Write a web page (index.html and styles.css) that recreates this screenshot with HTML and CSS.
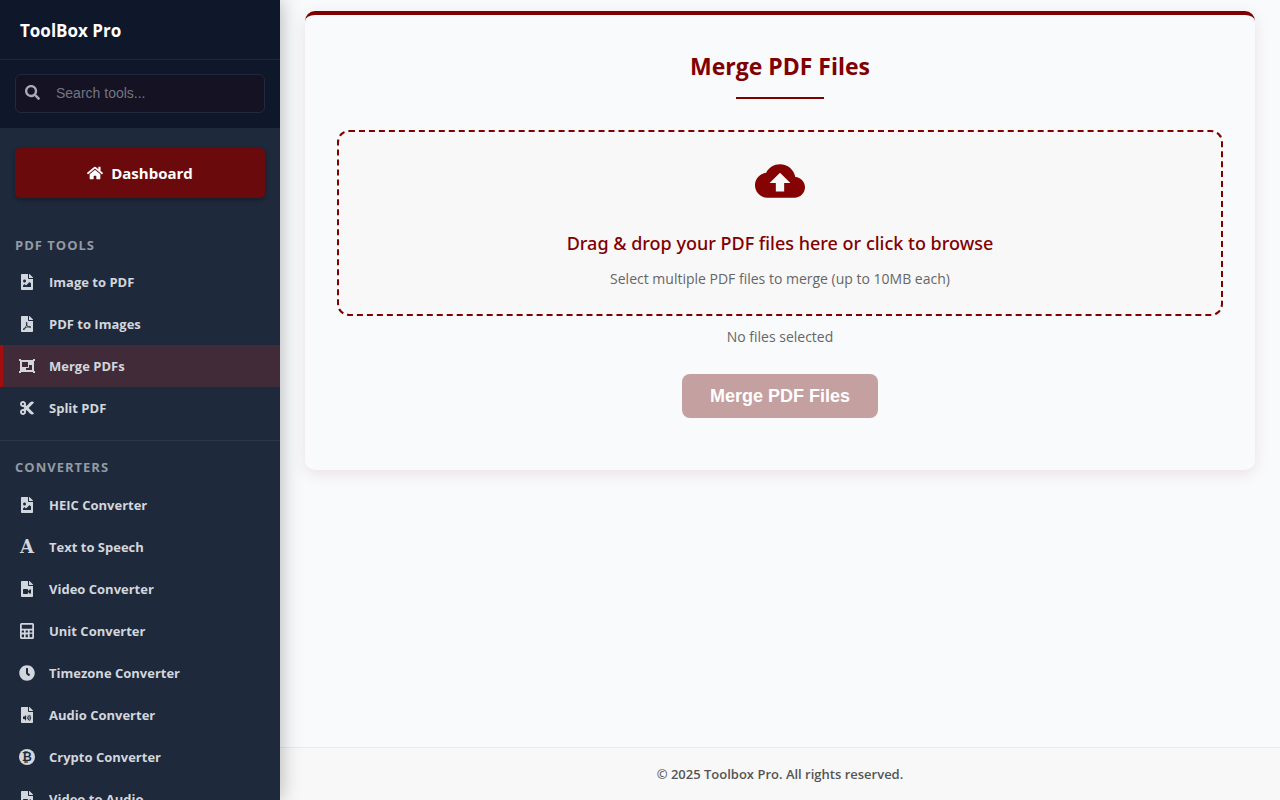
FILE: index.html
```html
<!DOCTYPE html>
<html lang="en">
<head>
<meta charset="utf-8">
<meta name="viewport" content="width=device-width, initial-scale=1">
<title>Merge PDF Files - ToolBox Pro</title>
<link rel="stylesheet" href="styles.css">
</head>
<body>
<svg class="sprite" aria-hidden="true">
  <symbol id="i-image" viewBox="0 0 384 512"><path d="M384 121.941V128H256V0h6.059a24 24 0 0 1 16.97 7.029l97.941 97.941a24.002 24.002 0 0 1 7.03 16.971zM248 160c-13.2 0-24-10.8-24-24V0H24C10.745 0 0 10.745 0 24v464c0 13.255 10.745 24 24 24h336c13.255 0 24-10.745 24-24V160H248zm-135.455 16c26.51 0 48 21.49 48 48s-21.49 48-48 48-48-21.49-48-48 21.491-48 48-48zm208 240h-256l.485-48.485L104.545 328c4.686-4.686 11.799-4.201 16.485.485L160.545 368 264.06 264.485c4.686-4.686 12.284-4.686 16.971 0L320.545 304v112z"/></symbol>
  <symbol id="i-pdf" viewBox="0 0 384 512"><path d="M181.9 256.1c-5-16-4.9-46.9-2-46.9 8.4 0 7.6 36.9 2 46.9zm-1.7 47.2c-7.7 20.2-17.3 43.3-28.4 62.7 18.3-7 39-17.2 62.9-21.9-12.7-9.6-24.9-23.4-34.5-40.8zM86.1 428.1c0 .8 13.2-5.4 34.9-40.2-6.7 6.3-29.1 24.5-34.9 40.2zM248 160h136v328c0 13.3-10.7 24-24 24H24c-13.3 0-24-10.7-24-24V24C0 10.7 10.7 0 24 0h200v136c0 13.2 10.8 24 24 24zm-8 171.8c-20-12.2-33.3-29-42.7-53.8 4.5-18.5 11.6-46.6 6.2-64.2-4.7-29.4-42.4-26.5-47.8-6.8-5 18.3-.4 44.1 8.1 77-11.6 27.6-28.7 64.6-40.8 85.8-.1 0-.1.1-.2.1-27.1 13.9-73.6 44.5-54.5 68 5.6 6.9 16 10 21.5 10 17.9 0 35.7-18 61.1-61.8 25.8-8.5 54.1-19.1 79-23.2 21.7 11.8 47.1 19.5 64 19.5 29.2 0 31.2-32 19.7-43.4-13.9-13.6-54.3-9.7-73.6-7.2zM377 105L279 7c-4.5-4.5-10.6-7-17-7h-6v128h128v-6.1c0-6.3-2.5-12.4-7-16.9zm-74.1 255.3c4.1-2.7-2.5-11.9-42.8-9 37.1 15.8 42.8 9 42.8 9z"/></symbol>
  <symbol id="i-group" viewBox="0 0 512 512"><path fill-rule="evenodd" d="M480 128V96h20c6.627 0 12-5.373 12-12V44c0-6.627-5.373-12-12-12h-40c-6.627 0-12 5.373-12 12v20H64V44c0-6.627-5.373-12-12-12H12C5.373 32 0 37.373 0 44v40c0 6.627 5.373 12 12 12h20v320H12c-6.627 0-12 5.373-12 12v40c0 6.627 5.373 12 12 12h40c6.627 0 12-5.373 12-12v-20h384v20c0 6.627 5.373 12 12 12h40c6.627 0 12-5.373 12-12v-40c0-6.627-5.373-12-12-12h-20V128zM96 276V140c0-6.600 5.400-12 12-12h168c6.600 0 12 5.400 12 12v136c0 6.600-5.400 12-12 12H108c-6.600 0-12-5.400-12-12zm320 96c0 6.600-5.400 12-12 12H236c-6.600 0-12-5.400-12-12v-52h72c13.300 0 24-10.700 24-24v-72h84c6.600 0 12 5.400 12 12v136z"/></symbol>
  <symbol id="i-cut" viewBox="0 0 448 512"><path d="M278.06 256L444.48 89.57c4.69-4.69 4.69-12.29 0-16.97-32.8-32.8-85.99-32.8-118.79 0L210.18 188.12l-24.86-24.86c4.31-10.92 6.68-22.81 6.68-35.26 0-53.02-42.98-96-96-96S0 74.98 0 128s42.98 96 96 96c4.54 0 8.99-.32 13.36-.93L142.29 256l-32.93 32.93c-4.37-.61-8.83-.93-13.36-.93-53.02 0-96 42.98-96 96s42.98 96 96 96 96-42.98 96-96c0-12.45-2.37-24.34-6.68-35.26l24.86-24.86L325.69 439.4c32.8 32.8 85.99 32.8 118.79 0 4.69-4.68 4.69-12.28 0-16.97L278.06 256zM96 160c-17.64 0-32-14.36-32-32s14.36-32 32-32 32 14.36 32 32-14.36 32-32 32zm0 256c-17.64 0-32-14.36-32-32s14.36-32 32-32 32 14.36 32 32-14.36 32-32 32z"/></symbol>
  <symbol id="i-video" viewBox="0 0 384 512"><path fill-rule="evenodd" d="M377 105L279 7c-4.500-4.500-10.600-7-17-7h-6v128h128v-6.100c0-6.300-2.500-12.400-7-16.900zM248 160c-13.200 0-24-10.800-24-24V0H24C10.700 0 0 10.700 0 24v464c0 13.300 10.700 24 24 24h336c13.300 0 24-10.700 24-24V160zM88 256h112c13 0 24 11 24 24v42l56-54c15-15 40-4 40 17v102c0 21-25 32-40 17l-56-54v42c0 13-11 24-24 24H88c-13 0-24-11-24-24V280c0-13 11-24 24-24z"/></symbol>
  <symbol id="i-audio" viewBox="0 0 384 512"><path fill-rule="evenodd" d="M377 105L279 7c-4.500-4.500-10.600-7-17-7h-6v128h128v-6.100c0-6.300-2.500-12.400-7-16.900zM248 160c-13.200 0-24-10.800-24-24V0H24C10.700 0 0 10.700 0 24v464c0 13.300 10.700 24 24 24h336c13.300 0 24-10.700 24-24V160zM64 306h46l50-50v180l-50-50H64z"/><path d="M194 304q26 42 0 84M232 270q56 76 0 152M274 252q72 94 0 188" fill="none" stroke="#1e293b" stroke-width="32"/></symbol>
  <symbol id="i-calc" viewBox="0 0 448 512"><path fill-rule="evenodd" d="M48 0h352q48 0 48 48v416q0 48-48 48H48q-48 0-48-48V48Q0 0 48 0zM56 56v128h336V56zM56 240v64h72v-64zm124 0v64h72v-64zM56 368v88h72v-88zm124 0v88h72v-88zM308 240v64h84v-64zM308 344v112h84V344z"/></symbol>
  <symbol id="i-clock" viewBox="0 0 512 512"><path d="M256 8C119 8 8 119 8 256s111 248 248 248 248-111 248-248S393 8 256 8zm92.490 313l-20 25a16 16 0 0 1-22.490 2.500l-67-49.720a40 40 0 0 1-15-31.230V112a16 16 0 0 1 16-16h32a16 16 0 0 1 16 16v144l58 42.500a16 16 0 0 1 2.490 22.500z"/></symbol>
</svg>
<div class="app">
  <aside class="sidebar">
    <div class="brand">ToolBox Pro</div>
    <div class="search">
      <label class="search-box">
        <svg class="search-icon" viewBox="0 0 512 512" aria-hidden="true"><path d="M505 442.700L405.300 343c-4.500-4.500-10.600-7-17-7H372c27.600-35.300 44-79.700 44-128C416 93.100 322.900 0 208 0S0 93.100 0 208s93.100 208 208 208c48.300 0 92.700-16.400 128-44v16.300c0 6.400 2.500 12.500 7 17l99.700 99.700c9.400 9.400 24.600 9.400 33.900 0l28.300-28.300c9.400-9.400 9.400-24.600.1-34zM208 336c-70.700 0-128-57.200-128-128 0-70.700 57.200-128 128-128 70.700 0 128 57.200 128 128 0 70.700-57.200 128-128 128z"/></svg>
        <input class="search-input" type="search" placeholder="Search tools..." aria-label="Search tools">
      </label>
    </div>
    <a class="dashboard" href="#"><svg class="home-icon" viewBox="0 0 576 512" aria-hidden="true"><path d="M280.370 148.260L96 300.110V464a16 16 0 0 0 16 16l112.060-.29a16 16 0 0 0 15.920-16V368a16 16 0 0 1 16-16h64a16 16 0 0 1 16 16v95.640a16 16 0 0 0 16 16.050L464 480a16 16 0 0 0 16-16V300L295.670 148.260a12.190 12.190 0 0 0-15.300 0zM571.600 251.470L488 182.560V44.050a12 12 0 0 0-12-12h-56a12 12 0 0 0-12 12v72.610L318.470 43a48 48 0 0 0-61 0L4.340 251.470a12 12 0 0 0-1.600 16.900l25.500 31A12 12 0 0 0 45.150 301l235.220-193.740a12.190 12.190 0 0 1 15.300 0L530.900 301a12 12 0 0 0 16.900-1.600l25.500-31a12 12 0 0 0-1.700-16.930z"/></svg>Dashboard</a>
    <nav>
      <section class="group">
        <h2 class="group-title">PDF TOOLS</h2>
        <a class="tool" href="#"><svg class="icon"><use href="#i-image"/></svg>Image to PDF</a>
        <a class="tool" href="#"><svg class="icon"><use href="#i-pdf"/></svg>PDF to Images</a>
        <a class="tool active" href="#" aria-current="page"><svg class="icon"><use href="#i-group"/></svg>Merge PDFs</a>
        <a class="tool" href="#"><svg class="icon"><use href="#i-cut"/></svg>Split PDF</a>
      </section>
      <section class="group">
        <h2 class="group-title">CONVERTERS</h2>
        <a class="tool" href="#"><svg class="icon"><use href="#i-image"/></svg>HEIC Converter</a>
        <a class="tool" href="#"><span class="icon letter" aria-hidden="true">A</span>Text to Speech</a>
        <a class="tool" href="#"><svg class="icon"><use href="#i-video"/></svg>Video Converter</a>
        <a class="tool" href="#"><svg class="icon"><use href="#i-calc"/></svg>Unit Converter</a>
        <a class="tool" href="#"><svg class="icon"><use href="#i-clock"/></svg>Timezone Converter</a>
        <a class="tool" href="#"><svg class="icon"><use href="#i-audio"/></svg>Audio Converter</a>
        <a class="tool" href="#"><span class="icon coin" aria-hidden="true">₿</span>Crypto Converter</a>
        <a class="tool" href="#"><svg class="icon"><use href="#i-video"/></svg>Video to Audio</a>
      </section>
    </nav>
  </aside>
  <div class="page">
    <main class="card">
      <h1 class="title">Merge PDF Files</h1>
      <label class="dropzone">
        <input class="file-input" type="file" accept="application/pdf" multiple>
        <svg class="cloud" viewBox="0 0 24 24" aria-hidden="true"><path d="M19.350 10.040C18.670 6.590 15.640 4 12 4 9.110 4 6.600 5.640 5.350 8.040 2.340 8.360 0 10.910 0 14c0 3.310 2.690 6 6 6h13c2.760 0 5-2.240 5-5 0-2.640-2.050-4.780-4.650-4.960zM14 13v4h-4v-4H7l5-5 5 5h-3z"/></svg>
        <span class="drop-text">Drag &amp; drop your PDF files here or click to browse</span>
        <span class="drop-hint">Select multiple PDF files to merge (up to 10MB each)</span>
      </label>
      <p class="status">No files selected</p>
      <button class="merge" type="button" disabled>Merge PDF Files</button>
    </main>
    <footer class="footer">© 2025 Toolbox Pro. All rights reserved.</footer>
  </div>
</div>
</body>
</html>
```
FILE: styles.css
```css
* { box-sizing: border-box; }

body {
  margin: 0;
  background: #f8fafc;
  font-family: "Open Sans", "Noto Sans", sans-serif;
  color: #555;
}

svg { fill: currentColor; }
.sprite { display: none; }

.app { display: flex; height: 100vh; }

.sidebar {
  flex: 0 0 280px;
  overflow: hidden;
  z-index: 1;
  background: #1e293b;
  box-shadow: 0 0 20px rgba(0, 0, 0, .3);
}

.brand {
  padding: 17px 20px 14px;
  background: #0f172a;
  border-bottom: 1px solid #1e293b;
  color: #fff;
  font-size: 17px;
  font-weight: 700;
  line-height: 28px;
}

.search { padding: 14px 15px 15px; background: #0f172a; }

.search-box {
  display: flex;
  align-items: center;
  gap: 16px;
  height: 39px;
  padding: 0 9px 2px;
  border: 1px solid #23293a;
  border-radius: 6px;
  background: #141223;
  color: #a9aab8;
}

.search-icon { width: 15px; height: 15px; }

.search-input {
  flex: 1;
  min-width: 0;
  padding: 0;
  border: 0;
  outline: 0;
  background: none;
  color: #fff;
  font: 14px "Liberation Sans", Arial, sans-serif;
}
.search-input::placeholder { color: #757581; }

.dashboard {
  display: flex;
  align-items: center;
  justify-content: center;
  gap: 8px;
  height: 50px;
  margin: 20px 15px 32px;
  border-radius: 5px;
  background: #6b0a0c;
  box-shadow: 0 2px 5px rgba(0, 0, 0, .3);
  color: #fff;
  font-size: 15px;
  font-weight: 700;
  text-decoration: none;
}
.home-icon { width: 16px; height: 16px; }

.group { padding-bottom: 11px; }
.group + .group { padding-top: 11px; border-top: 1px solid #2c3748; }

.group-title {
  margin: 0;
  padding: 5px 15px 6px;
  color: #939aa5;
  font-size: 13px;
  font-weight: 700;
  letter-spacing: 1px;
  line-height: 20px;
}
.group + .group .group-title { padding-bottom: 7px; }

.tool {
  display: flex;
  align-items: center;
  gap: 14px;
  height: 42px;
  padding: 0 16px;
  border-left: 3px solid transparent;
  color: #d2d6dd;
  font-size: 13px;
  font-weight: 700;
  text-decoration: none;
}
.tool.active { background: #422b39; border-left-color: #a30d0d; }

.icon { flex: 0 0 16px; width: 16px; height: 16px; }

.letter {
  font: 700 18px/16px "DejaVu Serif", serif;
  text-align: center;
}

.coin {
  border-radius: 50%;
  background: #d2d6dd;
  color: #1e293b;
  font: 700 12px/16px "DejaVu Sans", sans-serif;
  text-align: center;
}

.page { flex: 1; display: flex; flex-direction: column; min-width: 0; }

.card {
  display: flex;
  flex-direction: column;
  align-items: center;
  margin: 11px 25px auto;
  padding: 31px 32px 52px;
  border-top: 4px solid #800000;
  border-radius: 10px;
  background: #f8fafc;
  box-shadow: 0 4px 15px rgba(128, 0, 0, .1);
}

.title {
  margin: 0;
  color: #800000;
  font-size: 23px;
  font-weight: 700;
  line-height: 40px;
}
.title::after {
  content: "";
  display: block;
  width: 88px;
  height: 2px;
  margin: 11px auto 31px;
  background: #800000;
}

.dropzone {
  display: flex;
  flex-direction: column;
  align-items: center;
  align-self: stretch;
  padding: 24px 16px;
  border: 2px dashed #800000;
  border-radius: 12px;
  background: #f8f8f8;
  cursor: pointer;
}

.file-input {
  position: absolute;
  width: 1px;
  height: 1px;
  opacity: 0;
}

.cloud { width: 50px; height: 50px; color: #850303; }

.drop-text {
  margin-top: 23px;
  color: #800000;
  font-family: "Noto Sans", sans-serif;
  font-size: 18px;
  font-weight: 500;
  line-height: 28px;
}

.drop-hint { margin-top: 11px; font-size: 14px; line-height: 22px; color: #666; }

.status { margin: 10px 0 26px; font-size: 14px; line-height: 22px; color: #666; }

.merge {
  padding: 12px 28px;
  border: 0;
  border-radius: 8px;
  background: #c4a0a0;
  color: #fff;
  font: 700 18px/20px "Liberation Sans", Arial, sans-serif;
}

.footer {
  padding: 15px;
  border-top: 1px solid #e8ebee;
  background: #f8f8f8;
  font-size: 13px;
  font-weight: 600;
  line-height: 22px;
  text-align: center;
}
```
